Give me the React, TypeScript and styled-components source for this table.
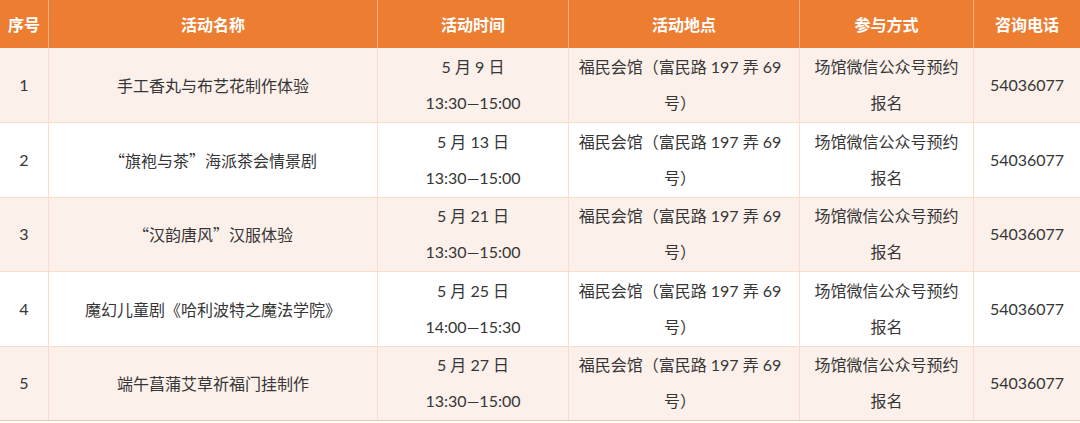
import React from 'react';
import styled, { createGlobalStyle } from 'styled-components';

const GlobalStyle = createGlobalStyle`
   html, body {
      margin: 0;
      padding: 0;
      background: #ffffff;
   }
   body {
      font-family: 'Lato', 'Noto Sans CJK SC', sans-serif;
   }
`;

interface IActivity {
   id: number;
   name: string;
   date: string;
   time: string;
   place: string;
   join: string;
   phone: string;
}

const activities: IActivity[] = [
   { id: 1, name: '手工香丸与布艺花制作体验', date: '5 月 9 日', time: '13:30—15:00', place: '福民会馆（富民路 197 弄 69 号）', join: '场馆微信公众号预约报名', phone: '54036077' },
   { id: 2, name: '“旗袍与茶”海派茶会情景剧', date: '5 月 13 日', time: '13:30—15:00', place: '福民会馆（富民路 197 弄 69 号）', join: '场馆微信公众号预约报名', phone: '54036077' },
   { id: 3, name: '“汉韵唐风”汉服体验', date: '5 月 21 日', time: '13:30—15:00', place: '福民会馆（富民路 197 弄 69 号）', join: '场馆微信公众号预约报名', phone: '54036077' },
   { id: 4, name: '魔幻儿童剧《哈利波特之魔法学院》', date: '5 月 25 日', time: '14:00—15:30', place: '福民会馆（富民路 197 弄 69 号）', join: '场馆微信公众号预约报名', phone: '54036077' },
   { id: 5, name: '端午菖蒲艾草祈福门挂制作', date: '5 月 27 日', time: '13:30—15:00', place: '福民会馆（富民路 197 弄 69 号）', join: '场馆微信公众号预约报名', phone: '54036077' },
];

const headers = ['序号', '活动名称', '活动时间', '活动地点', '参与方式', '咨询电话'];

export default function App() {
   return (
      <>
         <GlobalStyle />
         <Table>
            <HeadRow>
               {headers.map((h) => (
                  <HeadCell key={h}>{h}</HeadCell>
               ))}
            </HeadRow>
            {activities.map((a, i) => (
               <Row key={a.id} $shaded={i % 2 === 0}>
                  <Cell>{a.id}</Cell>
                  <NameCell>{a.name}</NameCell>
                  <Cell>
                     {a.date}
                     <br />
                     {a.time}
                  </Cell>
                  <Cell $pad="0 14px 0 6px">{a.place}</Cell>
                  <Cell $pad="0 10px">{a.join}</Cell>
                  <Cell>{a.phone}</Cell>
               </Row>
            ))}
         </Table>
      </>
   );
}

const columns = '48px 329px 191px 231px 174px 1fr';

const Table = styled.div`
   width: 1080px;
   display: flex;
   flex-direction: column;
   border-bottom: 1px solid #f6c7a8;
`;

const HeadRow = styled.div`
   display: grid;
   grid-template-columns: ${columns};
   height: 48px;
   background-color: #ed7d31;
`;

const HeadCell = styled.div`
   display: flex;
   align-items: center;
   justify-content: center;
   color: #ffffff;
   font-family: 'Noto Sans CJK SC', sans-serif;
   font-weight: 700;
   font-size: 16px;
   & + & {
      border-left: 1px solid #f4b183;
   }
`;

const Row = styled.div<{ $shaded: boolean }>`
   display: grid;
   grid-template-columns: ${columns};
   height: 74.4px;
   box-sizing: border-box;
   background-color: ${({ $shaded }) => ($shaded ? '#fbf0ea' : '#ffffff')};
   & + & {
      border-top: 1px solid #f9dccb;
   }
`;

const Cell = styled.div<{ $pad?: string }>`
   display: flex;
   align-items: center;
   justify-content: center;
   text-align: center;
   padding: ${({ $pad }) => $pad ?? '0'};
   color: #363636;
   font-size: 16px;
   line-height: 36px;
   border-left: 1px solid #f9dccb;
   &:first-child {
      border-left: none;
   }
`;

const NameCell = styled(Cell)`
   font-family: 'Noto Sans CJK SC', sans-serif;
   font-feature-settings: 'fwid' 1;
`;
